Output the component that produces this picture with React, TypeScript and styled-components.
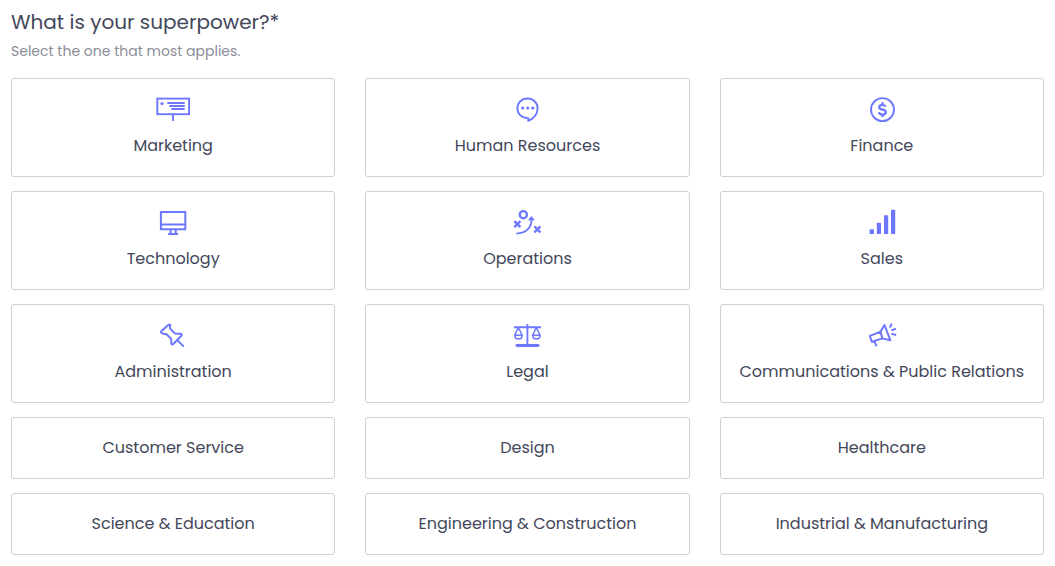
import React, { useState } from "react";
import styled, { createGlobalStyle } from "styled-components";

const GlobalStyle = createGlobalStyle`
  *, *::before, *::after { box-sizing: border-box; }
  body {
    margin: 0;
    background: #ffffff;
    color: #43475a;
    font-family: Poppins, Inter, "Liberation Sans", sans-serif;
  }
`;

const Page = styled.main`
  padding: 8px 11px 11px;
`;

const Title = styled.h1`
  margin: 0;
  font-size: 20px;
  line-height: 28px;
  font-weight: 400;
`;

const Hint = styled.p`
  margin: 4px 0 16px;
  color: #8b8d97;
  font-size: 14px;
  line-height: 22px;
`;

const Options = styled.div`
  display: grid;
  grid-template-columns: repeat(3, minmax(0, 1fr));
  gap: 14px 30px;
`;

const OptionCard = styled.button<{ $selected: boolean }>`
  display: flex;
  flex-direction: column;
  align-items: center;
  gap: 10px;
  padding: 18px 8px;
  border: 1px solid ${(p) => (p.$selected ? "#6e78ff" : "#d0d0d0")};
  border-radius: 3px;
  background: #ffffff;
  color: inherit;
  font: inherit;
  font-size: 16px;
  line-height: 24px;
  cursor: pointer;
`;

const Icon = styled.svg`
  display: block;
  width: 40px;
  height: 27px;
  overflow: visible;
  fill: none;
  stroke: #6e78ff;
  stroke-width: 1.9;
`;

const solid = { fill: "#6e78ff", stroke: "none" };

const options: { label: string; icon?: React.ReactNode }[] = [
  {
    label: "Marketing",
    icon: (
      <>
        <rect x="4.3" y="2.6" width="31.8" height="15.6" />
        <path d="M20 18.5V25" />
        <circle cx="9" cy="7.6" r="1.6" {...solid} />
        <path d="M14.3 7H31.7M16.3 10H31.7M18.3 13H31.7" strokeWidth="2" />
      </>
    ),
  },
  {
    label: "Human Resources",
    icon: (
      <g transform="translate(0.5 0)">
        <path d="M20.8 24.8V22.1C14.2 22.2 9.9 18 9.9 12.3C9.9 6.6 14.3 2.5 20 2.5C25.7 2.5 30.1 6.6 30.1 12.3C30.1 18 26.2 22.8 20.8 24.8Z" strokeLinejoin="round" />
        <g {...solid}>
          <circle cx="15.2" cy="12" r="1.6" />
          <circle cx="20.2" cy="12" r="1.6" />
          <circle cx="25.2" cy="12" r="1.6" />
        </g>
      </g>
    ),
  },
  {
    label: "Finance",
    icon: (
      <>
        <circle cx="20.5" cy="13.6" r="11.5" />
        <path d="M23.7 10.6C23.2 9.3 22.2 8.8 20.5 8.8C18.5 8.8 17.2 9.7 17.2 11.2C17.2 14.6 23.9 12.6 23.9 16.1C23.9 17.7 22.5 18.6 20.5 18.6C18.6 18.6 17.2 17.8 16.8 16.3M20.5 6.2V9M20.5 18.4V21.1" strokeWidth="2.3" />
      </>
    ),
  },
  {
    label: "Technology",
    icon: (
      <path
        d="M7.9 2.9H32.3V20.2H7.9ZM7.9 15.6H32.3M17.5 20.5V25M22.7 20.5V25M15.2 25H25"
        strokeWidth="2"
      />
    ),
  },
  {
    label: "Operations",
    icon: (
      <g transform="translate(0.5 0)">
        <circle cx="15.8" cy="5.7" r="3.6" strokeWidth="2.3" />
        <path d="M6.9 12.1L12.9 18.1M12.9 12.1L6.9 18.1M26.9 17.3L32.9 23.3M32.9 17.3L26.9 23.3" strokeWidth="2.4" />
        <path d="M8.8 24.6C18.4 24.4 24.4 18.7 24 9.6" />
        <path d="M23.9 7L27.4 11.2H20.4Z" {...solid} />
      </g>
    ),
  },
  {
    label: "Sales",
    icon: (
      <g {...solid}>
        <rect x="7.6" y="20.2" width="4.4" height="4.8" rx="0.5" />
        <rect x="14.8" y="13.8" width="4.2" height="11.2" rx="0.5" />
        <rect x="22" y="6.2" width="4.2" height="18.8" rx="0.5" />
        <rect x="29" y="0.8" width="4.2" height="24.2" rx="0.5" />
      </g>
    ),
  },
  {
    label: "Administration",
    icon: (
      <path
        transform="translate(0.5 0.3)"
        d="M8 8.6L15.1 2.4C16.1 1.7 17.3 2.9 16.7 3.9C16.2 5 16.2 6 17 6.8L21.3 11C22.8 12.1 25 11.2 27.2 11.5C28.3 11.7 28.5 12.7 27.8 13.5L19.8 21.7C18.9 22.5 17.8 22 17.7 20.9C17.5 19 18.4 17.3 17.2 16L13 12C11.5 11 10.2 11.7 8.6 11.1C7.4 10.7 7.1 9.5 8 8.6ZM23.8 17.8L30.3 24.3"
        strokeWidth="2"
        strokeLinejoin="round"
      />
    ),
  },
  {
    label: "Legal",
    icon: (
      <g transform="translate(0.5 0)">
        <path d="M19.9 2V22.5M6.5 5.2H33.5" />
        <path d="M10.8 5.5L7.3 13.2C7.3 18.2 14.7 18.2 14.7 13.2L10.8 5.5M7.3 13.2H14.7M28.8 5.5L25.2 13.2C25.2 18.2 32.6 18.2 32.6 13.2L28.8 5.5M25.2 13.2H32.6" strokeWidth="1.5" />
        <path d="M9.4 23.5H30.6" strokeWidth="2.8" strokeLinecap="round" />
      </g>
    ),
  },
  {
    label: "Communications & Public Relations",
    icon: (
      <path
        transform="translate(0.5 0)"
        d="M7.3 13.9L18 9.8L22 3L27.9 18.4L19.9 16.4L9.4 19.8ZM18 9.8L19.9 16.4M12 19.5L14 24.3M27.2 5.4L29.4 1.7M29 8.5L33.4 6.6M29 11.8L33.7 13"
        strokeWidth="2"
        strokeLinejoin="round"
      />
    ),
  },
  { label: "Customer Service" },
  { label: "Design" },
  { label: "Healthcare" },
  { label: "Science & Education" },
  { label: "Engineering & Construction" },
  { label: "Industrial & Manufacturing" },
];

export default function App() {
  const [selected, setSelected] = useState<string | null>(null);
  return (
    <>
      <GlobalStyle />
      <Page>
        <Title id="question">What is your superpower?*</Title>
        <Hint>Select the one that most applies.</Hint>
        <Options role="group" aria-labelledby="question">
          {options.map(({ label, icon }) => (
            <OptionCard
              key={label}
              type="button"
              $selected={selected === label}
              aria-pressed={selected === label}
              onClick={() => setSelected(label)}
            >
              {icon && (
                <Icon viewBox="0 1 40 27" aria-hidden="true">
                  {icon}
                </Icon>
              )}
              <span>{label}</span>
            </OptionCard>
          ))}
        </Options>
      </Page>
    </>
  );
}
